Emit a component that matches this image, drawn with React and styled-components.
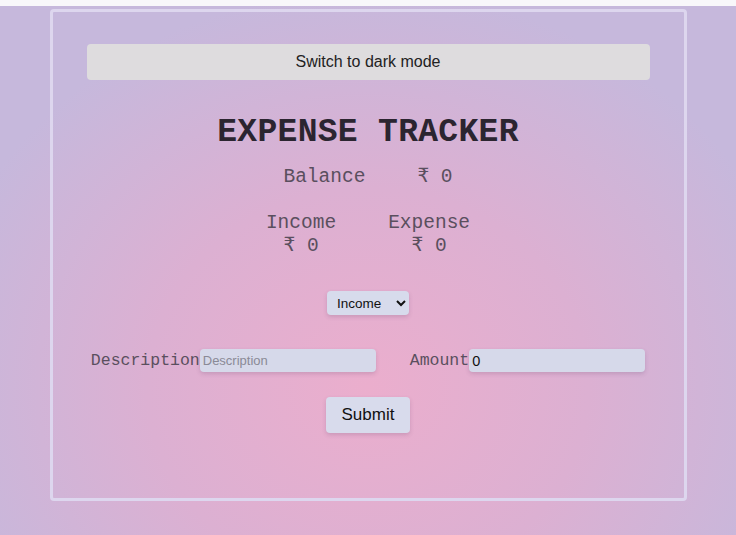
import React, { useState } from 'react';
import styled, { createGlobalStyle } from 'styled-components';

const GlobalStyle = createGlobalStyle`
    body {
        margin: 0;
        background: #f8f7fa;
        font-family: "Courier New", "Liberation Mono", monospace;
    }
`;

const Page = styled.div`
    margin-top: 6px;
    height: 529px;
    box-sizing: border-box;
    padding-top: 3px;
    display: flex;
    justify-content: center;
    align-items: flex-start;
    background: radial-gradient(ellipse 60% 75% at 50% 72%, #ebaecd 0%, #dcb0d2 50%, #c6b8dc 100%);
`;

const Card = styled.div`
    width: 637px;
    height: 492px;
    box-sizing: border-box;
    border: 3px solid #ddd6ee;
    border-radius: 4px;
    padding: 32px 34px 0;
    display: flex;
    flex-direction: column;
    align-items: center;
`;

const ModeButton = styled.button`
    width: 100%;
    height: 36px;
    border: none;
    border-radius: 4px;
    background: #dedcde;
    color: #222;
    font-family: "Liberation Sans", Arial, sans-serif;
    font-size: 16px;
    cursor: pointer;
`;

const Title = styled.h1`
    margin: 34px 0 0;
    font-size: 33px;
    line-height: 38px;
    font-weight: bold;
    color: #2b2530;
    font-family: "Courier New", "Liberation Mono", monospace;
    letter-spacing: 0.3px;
`;

const Row = styled.div`
    display: flex;
    gap: 52px;
    margin-top: ${({ top }) => top}px;
    color: #5a4f5e;
    font-size: 19.5px;
    line-height: 24px;
`;

const Column = styled.div`
    display: flex;
    flex-direction: column;
    align-items: center;
    line-height: 23px;
`;

const Select = styled.select`
    margin-top: 33px;
    height: 24px;
    width: 82px;
    padding: 0 4px 0 6px;
    border: none;
    border-radius: 4px;
    background: #d7dbec;
    box-shadow: 0 2px 4px rgba(90, 60, 100, 0.2);
    font-family: "Liberation Sans", Arial, sans-serif;
    font-size: 13.5px;
    color: #111;
`;

const FormRow = styled.div`
    display: flex;
    align-items: center;
    margin-top: 34px;
    gap: 34px;
`;

const Field = styled.label`
    display: flex;
    align-items: center;
    color: #5a4f5e;
    font-size: 16.5px;
`;

const Input = styled.input`
    width: 176px;
    height: 23px;
    box-sizing: border-box;
    margin: 0;
    padding: 0 3px;
    border: none;
    border-radius: 4px;
    background: #d6d9ea;
    box-shadow: 0 2px 4px rgba(90, 60, 100, 0.2);
    font-family: "Liberation Sans", Arial, sans-serif;
    font-size: ${({ big }) => (big ? '14.5px' : '13px')};
    color: #111;
    &::placeholder {
        color: #8a8a96;
    }
`;

const Submit = styled.button`
    margin-top: 25px;
    width: 84px;
    height: 36px;
    border: none;
    border-radius: 4px;
    background: #d8dbec;
    box-shadow: 0 2px 4px rgba(90, 60, 100, 0.2);
    font-family: "Liberation Sans", Arial, sans-serif;
    font-size: 17px;
    color: #111;
`;

const App = () => {
    const [dark, setDark] = useState(false);
    const [type, setType] = useState('income');
    const [desc, setDesc] = useState('');
    const [amount, setAmount] = useState(0);

    return (
        <>
            <GlobalStyle />
            <Page>
                <Card>
                    <ModeButton onClick={() => setDark(!dark)}>
                        {dark ? 'Switch to light mode' : 'Switch to dark mode'}
                    </ModeButton>
                    <Title>EXPENSE TRACKER</Title>
                    <Row top={13}>
                        <span>Balance</span>
                        <span>₹ 0</span>
                    </Row>
                    <Row top={23}>
                        <Column>
                            <span>Income</span>
                            <span>₹ 0</span>
                        </Column>
                        <Column>
                            <span>Expense</span>
                            <span>₹ 0</span>
                        </Column>
                    </Row>
                    <Select value={type} onChange={e => setType(e.target.value)}>
                        <option value="income">Income</option>
                        <option value="expense">Expense</option>
                    </Select>
                    <FormRow>
                        <Field>
                            Description
                            <Input placeholder="Description" value={desc} onChange={e => setDesc(e.target.value)} />
                        </Field>
                        <Field>
                            Amount
                            <Input big type="number" value={amount} onChange={e => setAmount(e.target.value)} />
                        </Field>
                    </FormRow>
                    <Submit>Submit</Submit>
                </Card>
            </Page>
        </>
    );
};

export default App;
